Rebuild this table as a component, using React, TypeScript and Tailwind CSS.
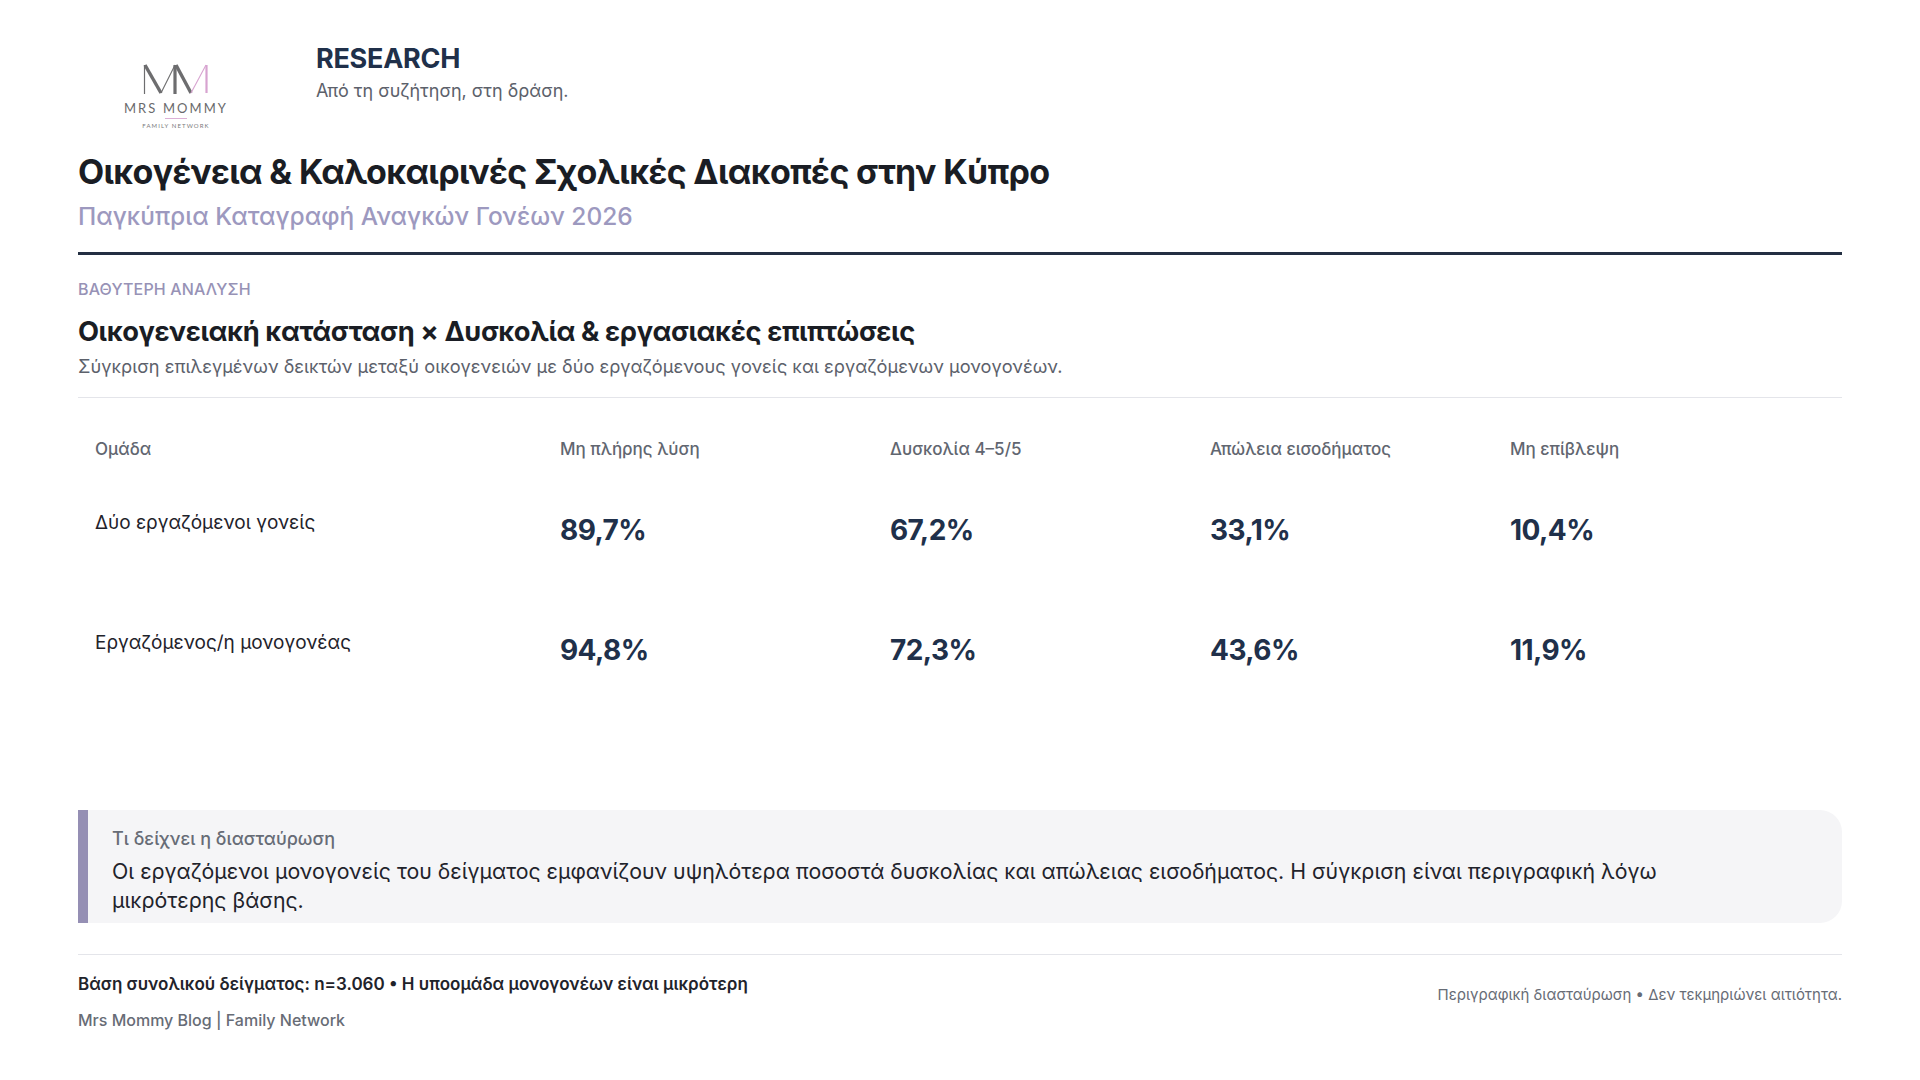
import React from "react";

type Row = {
  group: string;
  values: string[];
};

const columns = ["Μη πλήρης λύση", "Δυσκολία 4–5/5", "Απώλεια εισοδήματος", "Μη επίβλεψη"];

const rows: Row[] = [
  { group: "Δύο εργαζόμενοι γονείς", values: ["89,7%", "67,2%", "33,1%", "10,4%"] },
  { group: "Εργαζόμενος/η μονογονέας", values: ["94,8%", "72,3%", "43,6%", "11,9%"] },
];

const Logo = () => {
  return (
    <div className="flex w-[196px] flex-col items-center pt-[24px]">
      <svg width="68" height="31" viewBox="0 0 68 31" fill="none">
        <line x1="2.5" y1="1" x2="2.5" y2="30" stroke="#6d6d6f" strokeWidth="1.2" />
        <line x1="3" y1="1" x2="19" y2="29" stroke="#6d6d6f" strokeWidth="3.4" />
        <line x1="19" y1="29" x2="33" y2="1" stroke="#6d6d6f" strokeWidth="1.1" />
        <line x1="33" y1="1" x2="33" y2="30" stroke="#6d6d6f" strokeWidth="3.2" />
        <line x1="34" y1="1" x2="49" y2="29" stroke="#6d6d6f" strokeWidth="3.4" />
        <line x1="49" y1="29" x2="64" y2="1" stroke="#d7a3d0" strokeWidth="1.1" />
        <line x1="64.5" y1="1" x2="64.5" y2="29" stroke="#d7a3d0" strokeWidth="2.2" />
      </svg>
      <div className="mt-[6px] text-[13px] leading-[14px] tracking-[0.16em] text-[#6a6a6c] [font-family:'Lato','Liberation_Sans',sans-serif]">
        MRS MOMMY
      </div>
      <div className="mt-[3px] h-px w-[22px] bg-[#dcb0d6]" />
      <div className="mt-[3px] text-[6px] leading-[7px] tracking-[0.18em] text-[#7a7a7c] [font-family:'Lato','Liberation_Sans',sans-serif]">
        FAMILY NETWORK
      </div>
    </div>
  );
};

const App = () => {
  return (
    <div className="min-h-screen w-full bg-white px-[78px] pt-[40px] text-[#1c1f26] [font-family:'Inter','Noto_Sans',sans-serif]">
      <header className="flex items-start gap-[42px]">
        <Logo />
        <div className="flex flex-col">
          <span className="text-[27px] font-bold leading-[38px] tracking-[-0.01em] text-[#20304a]">RESEARCH</span>
          <span className="text-[18px] leading-[26px] text-[#5c616b]">Από τη συζήτηση, στη δράση.</span>
        </div>
      </header>

      <h1 className="mt-[21px] text-[34px] font-bold leading-[44px] tracking-[-0.02em] text-[#1a1d24]">
        Οικογένεια &amp; Καλοκαιρινές Σχολικές Διακοπές στην Κύπρο
      </h1>
      <p className="mt-[6px] text-[24.5px] font-medium leading-[32px] text-[#9d99bf]">
        Παγκύπρια Καταγραφή Αναγκών Γονέων 2026
      </p>
      <div className="mt-[20px] h-[3px] w-full bg-[#232f42]" />

      <section>
        <div className="mt-[24px] text-[16px] font-medium uppercase leading-[20px] tracking-[0.01em] text-[#9792b6]">
          Βαθυτερη αναλυση
        </div>
        <h2 className="mt-[15px] text-[27.3px] font-bold leading-[36px] tracking-[-0.015em] text-[#1a1d24]">
          Οικογενειακή κατάσταση × Δυσκολία &amp; εργασιακές επιπτώσεις
        </h2>
        <p className="mt-[4px] text-[18.2px] leading-[24px] text-[#5c616b]">
          Σύγκριση επιλεγμένων δεικτών μεταξύ οικογενειών με δύο εργαζόμενους γονείς και εργαζόμενων μονογονέων.
        </p>
        <div className="mt-[19px] h-px w-full bg-[#e4e5ea]" />

        <div className="grid grid-cols-[465px_330px_320px_300px_1fr] pt-[39px] pb-[48px] text-[17px] font-medium leading-[24px] text-[#616670]">
          <div className="px-[17px]">Ομάδα</div>
          {columns.map((c) => (
            <div key={c} className="px-[17px]">
              {c}
            </div>
          ))}
        </div>

        {rows.map((r) => (
          <div key={r.group} className="grid h-[120px] grid-cols-[465px_330px_320px_300px_1fr] items-start">
            <div className="px-[17px] text-[19px] leading-[28px] text-[#1f232b]">{r.group}</div>
            {r.values.map((v, i) => (
              <div key={i} className="px-[17px] text-[28px] font-bold leading-[42px] tracking-[-0.02em] text-[#20304a]">
                {v}
              </div>
            ))}
          </div>
        ))}

        <div className="mt-[61px] flex rounded-r-[22px] border-l-[10px] border-[#958fb4] bg-[#f5f5f7] pt-[17px] pb-[8px] pl-[24px] pr-[24px]">
          <div className="flex flex-col">
            <span className="text-[18px] font-medium leading-[24px] text-[#676c76]">Τι δείχνει η διασταύρωση</span>
            <p className="mt-[6px] max-w-[1600px] text-[21.3px] leading-[29px] text-[#1f232b]">
              Οι εργαζόμενοι μονογονείς του δείγματος εμφανίζουν υψηλότερα ποσοστά δυσκολίας και απώλειας
              εισοδήματος. Η σύγκριση είναι περιγραφική λόγω μικρότερης βάσης.
            </p>
          </div>
        </div>
      </section>

      <footer className="mt-[31px] flex items-start justify-between border-t border-[#e4e5ea] pt-[17px]">
        <div className="flex flex-col">
          <span className="text-[17px] font-semibold leading-[24px] text-[#1f232b]">
            Βάση συνολικού δείγματος: n=3.060 • Η υποομάδα μονογονέων είναι μικρότερη
          </span>
          <span className="mt-[13px] text-[16px] font-medium leading-[22px] text-[#676c76]">
            Mrs Mommy Blog | Family Network
          </span>
        </div>
        <span className="mt-[12px] text-[15px] leading-[22px] text-[#676c76]">
          Περιγραφική διασταύρωση • Δεν τεκμηριώνει αιτιότητα.
        </span>
      </footer>
    </div>
  );
};

export default App;
